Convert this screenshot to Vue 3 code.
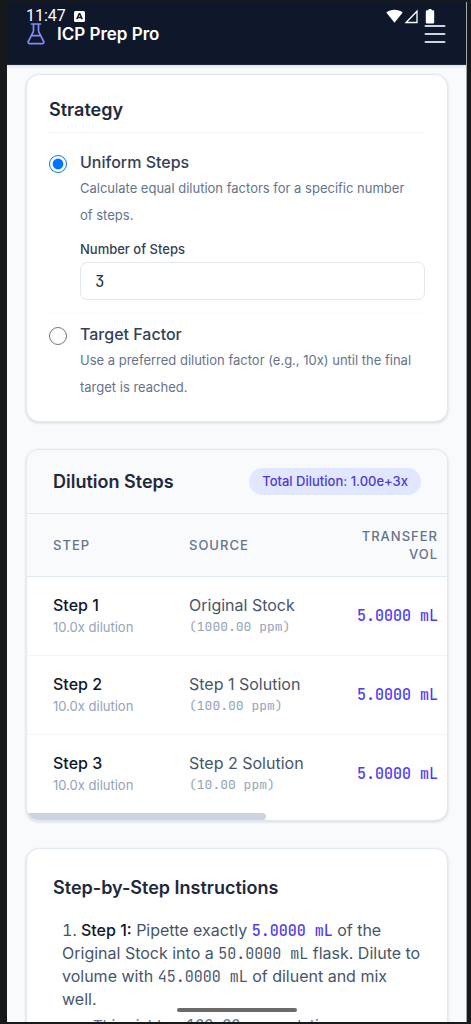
<script setup>
import { ref } from 'vue'

const mode = ref('uniform')
const count = ref('3')
const steps = [
  { id: 1, source: 'Original Stock', ppm: '1000.00' },
  { id: 2, source: 'Step 1 Solution', ppm: '100.00' },
  { id: 3, source: 'Step 2 Solution', ppm: '10.00' }
]
</script>

<template>
  <div class="device">
    <div class="screen">
      <div class="status" aria-hidden="true">
        <span class="clock">11:47</span>
        <svg class="badge-a" viewBox="0 0 11 11">
          <rect width="11" height="11" rx="1.5" fill="#fff" />
          <path d="M2.8 8.3 5.2 2.8h.6l2.4 5.5M3.9 6.5h3.2" fill="none" stroke="#0f172a" stroke-width="1.5" />
        </svg>
        <svg class="signals" viewBox="0 0 50 15">
          <path d="M.3 3.6C4.7-.2 12.3-.2 16.7 3.6L8.5 13.8Z" fill="#fff" />
          <path d="M20 13.5H31V2.2Z" fill="none" stroke="#fff" stroke-width="1.3" />
          <path d="M42.5 0h3v1.300h1.500a1.200 1.200 0 0 1 1.200 1.200v10.800a1.200 1.200 0 0 1-1.200 1.200h-6a1.200 1.200 0 0 1-1.200-1.200v-10.800a1.200 1.200 0 0 1 1.200-1.200h1.500Z" fill="#fff" />
        </svg>
      </div>

      <header class="topbar">
        <svg class="flask" viewBox="0 0 18 22" fill="none" stroke="#818cf8" stroke-width="1.7" stroke-linecap="round" stroke-linejoin="round">
          <path d="M4.500 1h9M6.500 1v6.500a3 3 0 0 1-.3 1.300L1.400 18.300a1.600 1.600 0 0 0 1.500 2.400h12.200a1.600 1.600 0 0 0 1.500-2.400L11.800 8.800a3 3 0 0 1-.3-1.300V1M4.800 12.700h8.400" />
        </svg>
        <span class="brand">ICP Prep Pro</span>
        <button class="menu" type="button" aria-label="Menu">
          <svg viewBox="0 0 22 20" stroke="#cbd5e1" stroke-width="2" stroke-linecap="round">
            <path d="M1.500 2h19M1.500 10h19M1.500 18h19" />
          </svg>
        </button>
      </header>

      <main class="content">
        <section class="card strategy">
          <h2 class="strategy-title">Strategy</h2>
          <div class="option">
            <input id="uniform" v-model="mode" type="radio" name="strategy" value="uniform" />
            <div class="option-body">
              <label class="option-name" for="uniform">Uniform Steps</label>
              <p class="hint">Calculate equal dilution factors for a specific number of steps.</p>
              <label class="field-label" for="count">Number of Steps</label>
              <input id="count" v-model="count" class="field" type="text" inputmode="numeric" />
            </div>
          </div>
          <div class="option second">
            <input id="target" v-model="mode" type="radio" name="strategy" value="target" />
            <div class="option-body">
              <label class="option-name" for="target">Target Factor</label>
              <p class="hint">Use a preferred dilution factor (e.g., 10x) until the final target is reached.</p>
            </div>
          </div>
        </section>

        <section class="card steps">
          <div class="steps-head">
            <h2>Dilution Steps</h2>
            <span class="pill">Total Dilution: 1.00e+3x</span>
          </div>
          <table>
            <thead>
              <tr>
                <th class="c-step">Step</th>
                <th class="c-source">Source</th>
                <th class="c-vol">Transfer Vol</th>
              </tr>
            </thead>
            <tbody>
              <tr v-for="s in steps" :key="s.id">
                <td><strong>Step {{ s.id }}</strong><small>10.0x dilution</small></td>
                <td>{{ s.source }}<small class="mono">({{ s.ppm }} ppm)</small></td>
                <td class="c-vol mono vol">5.0000 mL</td>
              </tr>
            </tbody>
          </table>
          <div class="scrollbar"></div>
        </section>

        <section class="card guide">
          <h2>Step-by-Step Instructions</h2>
          <ol>
            <li>
              <strong>Step 1:</strong> Pipette exactly <b class="mono vol">5.0000 mL</b> of the Original Stock into a
              <span class="mono">50.0000 mL</span> flask. Dilute to volume with
              <span class="mono">45.0000 mL</span> of diluent and mix well.
              <p class="yield">This yields a <span class="mono">100.00 ppm</span> solution.</p>
            </li>
          </ol>
        </section>
      </main>
      <div class="home-bar"></div>
    </div>
  </div>
</template>

<style>
body {
  background: #18191b;
}
</style>

<style scoped>
* {
  box-sizing: border-box;
}
.device {
  height: 100vh;
  padding: 2px 4px 2px 7px;
  font-family: Inter, "Liberation Sans", sans-serif;
  font-size: 16px;
  color: #475569;
}
.screen {
  position: relative;
  height: 100%;
  overflow: hidden;
  background: #f8fafc;
  border-right: 1px solid #a3a6aa;
}
h2,
p,
ol {
  margin: 0;
}
.mono {
  font-family: "JetBrains Mono", "Roboto Mono", "Liberation Mono", monospace;
  font-size: 15px;
}
.status {
  position: absolute;
  top: 6px;
  left: 19px;
  right: 30px;
  display: flex;
  align-items: center;
  gap: 8px;
  color: #fff;
  font-family: Roboto, sans-serif;
  font-size: 16px;
  line-height: 16px;
}
.badge-a {
  width: 11px;
  height: 11px;
}
.signals {
  width: 50px;
  height: 15px;
  margin-left: auto;
}
.topbar {
  display: flex;
  align-items: center;
  height: 63px;
  padding: 2px 20px 0;
  background: #0f172a;
  border-bottom: 1px solid #1e293b;
  box-shadow: 0 1px 4px rgba(15, 23, 42, 0.15);
}
.flask {
  width: 18px;
  height: 22px;
  margin-right: 12px;
}
.brand {
  color: #fff;
  font-size: 17px;
  font-weight: 600;
}
.menu {
  display: flex;
  margin-left: auto;
  padding: 0;
  border: 0;
  background: none;
}
.menu svg {
  width: 22px;
  height: 20px;
}
.content {
  display: flex;
  flex-direction: column;
  gap: 27px;
  padding: 9px 18px 8px 19px;
}
.card {
  background: #fff;
  border: 1px solid #e2e8f0;
  border-radius: 13px;
  box-shadow: 0 1px 3px rgba(15, 23, 42, 0.15);
}
h2 {
  color: #1e293b;
  font-size: 18px;
  line-height: 26px;
  font-weight: 600;
}
.strategy {
  padding: 22px 22px 20px;
}
.strategy-title {
  padding-bottom: 9px;
  border-bottom: 1px solid #f1f5f9;
}
.option {
  display: flex;
  gap: 13px;
  padding-top: 16px;
}
.option input[type="radio"] {
  flex: none;
  width: 18px;
  height: 18px;
  margin: 6px 0 0;
}
.option.second {
  margin-top: 13px;
  padding-top: 7px;
  border-top: 1px solid #f8fafc;
}
.option-body {
  flex: 1;
  min-width: 0;
}
.option-name {
  display: block;
  color: #334155;
  font-size: 16px;
  line-height: 26px;
  font-weight: 500;
}
.hint {
  padding-right: 10px;
  color: #64748b;
  font-size: 13px;
  line-height: 27px;
}
.field-label {
  display: block;
  margin-top: 10px;
  color: #334155;
  font-size: 13px;
  line-height: 20px;
  font-weight: 500;
}
.field {
  display: block;
  width: 100%;
  height: 38px;
  margin-top: 3px;
  padding: 0 14px;
  border: 1px solid #e2e8f0;
  border-radius: 7px;
  background: #fff;
  color: #1e293b;
  font: 16px "JetBrains Mono", "Roboto Mono", "Liberation Mono", monospace;
}
.steps {
  overflow: hidden;
}
.steps-head {
  display: flex;
  align-items: center;
  justify-content: space-between;
  padding: 18px 26px;
  background: #f8fafc;
  border-bottom: 1px solid #e2e8f0;
}
.pill {
  padding: 0 13px;
  border-radius: 14px;
  background: #e0e7ff;
  color: #4f39d8;
  font-size: 13px;
  line-height: 27px;
  font-weight: 500;
}
table {
  width: 100%;
  border-collapse: collapse;
  table-layout: fixed;
}
th {
  height: 62px;
  padding: 0 0 0 26px;
  background: #f8fafc;
  border-bottom: 1px solid #e2e8f0;
  color: #64748b;
  font-size: 13px;
  line-height: 18px;
  font-weight: 500;
  letter-spacing: 1px;
  text-align: left;
  text-transform: uppercase;
}
.c-step,
.c-source {
  width: 136px;
}
td {
  height: 79px;
  padding: 0 0 0 26px;
  border-bottom: 1px solid #f1f5f9;
  color: #475569;
  line-height: 22px;
  white-space: nowrap;
}
tbody tr:last-child td {
  border-bottom: 0;
}
td strong {
  color: #0f172a;
  font-weight: 500;
}
td small,
td small.mono {
  display: block;
  color: #94a3b8;
  font-size: 13px;
}
th.c-vol,
td.c-vol {
  padding-left: 50px;
  padding-right: 9px;
  text-align: right;
}
td.vol,
.vol {
  color: #4f39f6;
  font-weight: 500;
}
.scrollbar {
  width: 57%;
  height: 7px;
  border-radius: 0 4px 4px 0;
  background: #cbd5e1;
}
.guide {
  padding: 26px;
}
ol {
  margin-top: 18px;
  padding-left: 9px;
  list-style: decimal inside;
  line-height: 23px;
}
li .mono {
  line-height: 18px;
}
li strong {
  color: #0f172a;
  font-weight: 500;
}
.yield {
  margin-top: 3px;
  padding-left: 30px;
  font-size: 15px;
  font-style: italic;
  color: #64748b;
}
.home-bar {
  position: absolute;
  bottom: 10px;
  left: 50%;
  width: 120px;
  height: 4px;
  margin-left: -60px;
  border-radius: 2px;
  background: #6b6b6b;
}
</style>
